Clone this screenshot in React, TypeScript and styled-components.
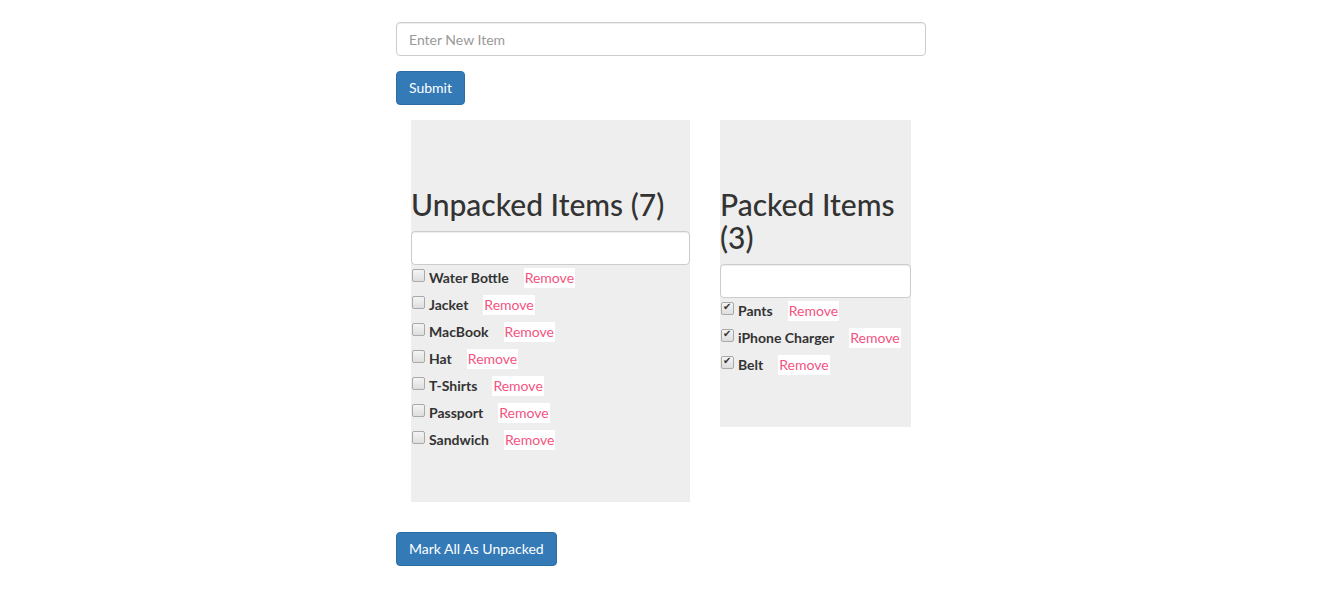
import React, { useState } from "react";
import styled, { createGlobalStyle } from "styled-components";

const Global = createGlobalStyle`
  html, body { margin: 0; padding: 0; background: #fff; }
  body {
    font-family: "Segoe UI", Lato, "Noto Sans", sans-serif;
    font-size: 14px;
    line-height: 1.42857;
    color: #333;
  }
  * { box-sizing: border-box; }
`;

const Page = styled.div`
  width: 533px;
  margin: 0 auto;
  padding-top: 22px;
`;

const TextInput = styled.input`
  display: block;
  width: 100%;
  height: 34px;
  padding: 6px 12px;
  font: inherit;
  font-size: 14px;
  color: #555;
  background: #fff;
  border: 1px solid #ccc;
  border-radius: 4px;
  box-shadow: inset 0 1px 1px rgba(0, 0, 0, 0.075);
  outline: none;
  &::placeholder { color: #999; }
`;

const MainInput = styled(TextInput)`
  width: 530px;
`;

const PrimaryButton = styled.button`
  display: inline-block;
  height: 34px;
  padding: 6px 12px;
  font: inherit;
  font-size: 14px;
  color: #fff;
  background: #337ab7;
  border: 1px solid #2e6da4;
  border-radius: 4px;
  cursor: pointer;
`;

const SubmitRow = styled.div`
  margin-top: 15px;
  line-height: 0;
`;

const Columns = styled.div`
  display: flex;
  align-items: flex-start;
  gap: 30px;
  margin-top: 15px;
  padding-left: 15px;
`;

const Panel = styled.section<{ $w: number }>`
  width: ${(p) => p.$w}px;
  background: #eee;
  padding: 50px 0 49px;
`;

const Heading = styled.h2`
  margin: 18px 0 10px;
  font-size: 30px;
  font-weight: 500;
  line-height: 1.1;
  color: #333;
`;

const List = styled.ul`
  list-style: none;
  margin: -1px 0 0;
  padding: 0;
`;

const Row = styled.li`
  display: flex;
  align-items: center;
  height: 27px;
`;

const Check = styled.input`
  appearance: none;
  -webkit-appearance: none;
  position: relative;
  width: 13px;
  height: 13px;
  margin: -4px 4px 0 1px;
  flex: none;
  border: 1px solid #a9a9a9;
  border-radius: 2px;
  background: linear-gradient(#f4f4f4, #dedede);
  &:checked::after {
    content: "✔";
    position: absolute;
    left: 1px;
    top: -3px;
    font-size: 10px;
    line-height: 14px;
    color: #333;
  }
`;

const Name = styled.label`
  font-weight: 700;
  font-size: 14px;
  color: #333;
  margin-right: 15px;
`;

const RemoveButton = styled.button`
  border: none;
  background: #fff;
  color: #f5537f;
  font: inherit;
  font-size: 14px;
  padding: 0 1px;
  height: 20px;
  line-height: 20px;
  cursor: pointer;
`;

const BottomRow = styled.div`
  margin-top: 30px;
`;

type Item = { id: number; name: string; packed: boolean };

const initial: Item[] = [
  { id: 1, name: "Water Bottle", packed: false },
  { id: 2, name: "Jacket", packed: false },
  { id: 3, name: "MacBook", packed: false },
  { id: 4, name: "Hat", packed: false },
  { id: 5, name: "T-Shirts", packed: false },
  { id: 6, name: "Passport", packed: false },
  { id: 7, name: "Sandwich", packed: false },
  { id: 8, name: "Pants", packed: true },
  { id: 9, name: "iPhone Charger", packed: true },
  { id: 10, name: "Belt", packed: true },
];

function ItemList({
  title,
  items,
  width,
  onToggle,
  onRemove,
}: {
  title: string;
  items: Item[];
  width: number;
  onToggle: (id: number) => void;
  onRemove: (id: number) => void;
}) {
  return (
    <Panel $w={width}>
      <Heading>
        {title} ({items.length})
      </Heading>
      <TextInput aria-label={`Filter ${title}`} />
      <List>
        {items.map((it) => (
          <Row key={it.id}>
            <Check
              type="checkbox"
              id={`item-${it.id}`}
              checked={it.packed}
              onChange={() => onToggle(it.id)}
            />
            <Name htmlFor={`item-${it.id}`}>{it.name}</Name>
            <RemoveButton onClick={() => onRemove(it.id)}>Remove</RemoveButton>
          </Row>
        ))}
      </List>
    </Panel>
  );
}

export default function App() {
  const [items, setItems] = useState<Item[]>(initial);
  const toggle = (id: number) =>
    setItems((xs) => xs.map((x) => (x.id === id ? { ...x, packed: !x.packed } : x)));
  const remove = (id: number) => setItems((xs) => xs.filter((x) => x.id !== id));
  return (
    <>
      <Global />
      <Page>
        <MainInput placeholder="Enter New Item" />
        <SubmitRow>
          <PrimaryButton>Submit</PrimaryButton>
        </SubmitRow>
        <Columns>
          <ItemList
            title="Unpacked Items"
            width={279}
            items={items.filter((x) => !x.packed)}
            onToggle={toggle}
            onRemove={remove}
          />
          <ItemList
            title="Packed Items"
            width={191}
            items={items.filter((x) => x.packed)}
            onToggle={toggle}
            onRemove={remove}
          />
        </Columns>
        <BottomRow>
          <PrimaryButton>Mark All As Unpacked</PrimaryButton>
        </BottomRow>
      </Page>
    </>
  );
}
